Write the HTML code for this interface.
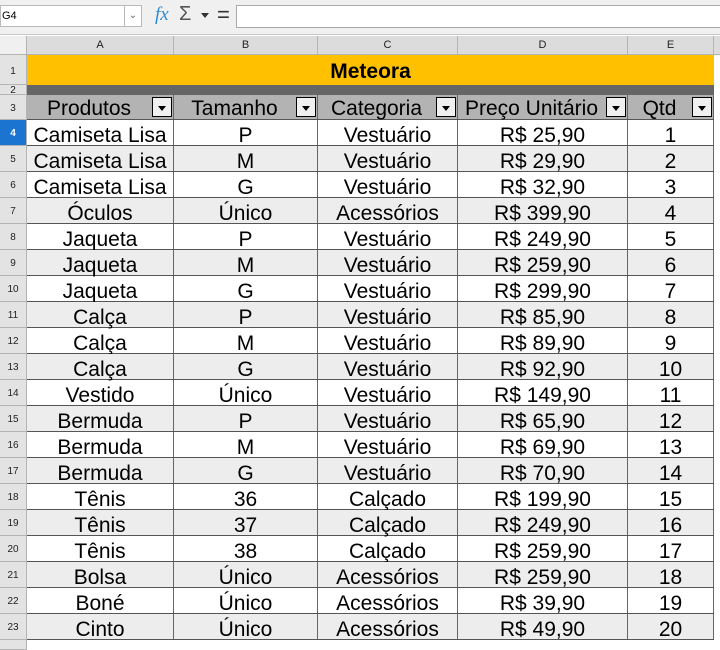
<!DOCTYPE html><html><head><meta charset="utf-8"><style>
*{margin:0;padding:0;box-sizing:border-box}
body{width:720px;height:646px;overflow:hidden;background:#fff;font-family:"Liberation Sans",sans-serif;position:relative}
.tb{position:absolute;left:0;top:0;width:720px;height:35px;background:#f0f0f0;border-bottom:1px solid #c8c8c8}
.nb{position:absolute;left:0;top:5px;width:142px;height:22px;background:#fff;border:1px solid #bbb;font-size:11px;line-height:20px;padding-left:1px}
.nbb{position:absolute;left:124px;top:5px;width:18px;height:22px;border:1px solid #bbb;background:#fff;font-size:10px;color:#666;text-align:center;line-height:20px}
.fx{position:absolute;left:155px;top:4px;font-family:"Liberation Serif",serif;font-style:italic;color:#2a8ad4;font-size:19px}
.sg{position:absolute;left:179px;top:3px;font-size:20px;color:#555}
.ar{position:absolute;left:201px;top:13px;border-left:4px solid transparent;border-right:4px solid transparent;border-top:5px solid #333}
.eq{position:absolute;left:217px;top:2px;font-size:22px;color:#333}
.fi{position:absolute;left:236px;top:5px;width:490px;height:23px;background:#fff;border:1px solid #aaa}
.ch{position:absolute;top:36px;height:19px;background:#dcdcdc;border-right:1px solid #b4b4b4;border-bottom:1px solid #b4b4b4;font-size:11px;text-align:center;line-height:18px;color:#222}
.rh{position:absolute;left:0;width:27px;background:#e3e3e3;border-bottom:1px solid #b4b4b4;border-right:1px solid #b4b4b4;font-size:10px;text-align:center;color:#222;padding-top:2px}
.row{position:absolute;left:27px;width:687px;display:flex;height:26px;border-bottom:1px solid #555}
.row div{border-right:1px solid #666;text-align:center;font-size:21px;line-height:25px;padding-top:3px;color:#000;white-space:nowrap}
.c1{width:147px}.c2{width:144px}.c3{width:140px}.c4{width:170px}.c5{width:86px}
.g{background:#ededed}
.hd{background:#b3b3b3}
.hd div{position:relative;padding-right:22px;padding-top:1px}
.dd{position:absolute;right:1px;top:2px;width:20px;height:20px;border:1px solid #000;background:#f0f0f0}
.dd:after{content:"";position:absolute;left:5px;top:8px;border-left:4px solid transparent;border-right:4px solid transparent;border-top:5px solid #000}
</style></head><body>
<div class="tb"><div class="nb">G4</div><div class="nbb">⌄</div><div class="fx">fx</div><div class="sg">Σ</div><div class="ar"></div><div class="eq">=</div><div class="fi"></div></div>
<div class="ch" style="left:0;width:27px;background:#f0f0f0"></div>
<div class="ch" style="left:27px;width:147px">A</div>
<div class="ch" style="left:174px;width:144px">B</div>
<div class="ch" style="left:318px;width:140px">C</div>
<div class="ch" style="left:458px;width:170px">D</div>
<div class="ch" style="left:628px;width:86px">E</div>
<div class="ch" style="left:714px;width:6px;border-right:none"></div>
<div class="rh" style="top:55px;height:30px;line-height:29px">1</div>
<div class="rh" style="top:85px;height:10px;line-height:8px">2</div>
<div class="rh" style="top:95px;height:25px;line-height:23px">3</div>
<div style="position:absolute;left:27px;top:55px;width:687px;height:30px;background:#ffc000;text-align:center;font-weight:bold;font-size:21px;line-height:33px">Meteora</div>
<div style="position:absolute;left:27px;top:85px;width:687px;height:10px;background:#666"></div>
<div class="row hd" style="top:95px;height:25px"><div class="c1">Produtos<span class="dd"></span></div><div class="c2">Tamanho<span class="dd"></span></div><div class="c3">Categoria<span class="dd"></span></div><div class="c4">Preço Unitário<span class="dd"></span></div><div class="c5">Qtd<span class="dd"></span></div></div>
<div class="rh" style="top:120px;height:26px;line-height:24px;background:#1a74d0;color:#fff;font-weight:bold">4</div>
<div class="row" style="top:120px"><div class="c1">Camiseta Lisa</div><div class="c2">P</div><div class="c3">Vestuário</div><div class="c4">R$ 25,90</div><div class="c5">1</div></div>
<div class="rh" style="top:146px;height:26px;line-height:24px">5</div>
<div class="row g" style="top:146px"><div class="c1">Camiseta Lisa</div><div class="c2">M</div><div class="c3">Vestuário</div><div class="c4">R$ 29,90</div><div class="c5">2</div></div>
<div class="rh" style="top:172px;height:26px;line-height:24px">6</div>
<div class="row" style="top:172px"><div class="c1">Camiseta Lisa</div><div class="c2">G</div><div class="c3">Vestuário</div><div class="c4">R$ 32,90</div><div class="c5">3</div></div>
<div class="rh" style="top:198px;height:26px;line-height:24px">7</div>
<div class="row g" style="top:198px"><div class="c1">Óculos</div><div class="c2">Único</div><div class="c3">Acessórios</div><div class="c4">R$ 399,90</div><div class="c5">4</div></div>
<div class="rh" style="top:224px;height:26px;line-height:24px">8</div>
<div class="row" style="top:224px"><div class="c1">Jaqueta</div><div class="c2">P</div><div class="c3">Vestuário</div><div class="c4">R$ 249,90</div><div class="c5">5</div></div>
<div class="rh" style="top:250px;height:26px;line-height:24px">9</div>
<div class="row g" style="top:250px"><div class="c1">Jaqueta</div><div class="c2">M</div><div class="c3">Vestuário</div><div class="c4">R$ 259,90</div><div class="c5">6</div></div>
<div class="rh" style="top:276px;height:26px;line-height:24px">10</div>
<div class="row" style="top:276px"><div class="c1">Jaqueta</div><div class="c2">G</div><div class="c3">Vestuário</div><div class="c4">R$ 299,90</div><div class="c5">7</div></div>
<div class="rh" style="top:302px;height:26px;line-height:24px">11</div>
<div class="row g" style="top:302px"><div class="c1">Calça</div><div class="c2">P</div><div class="c3">Vestuário</div><div class="c4">R$ 85,90</div><div class="c5">8</div></div>
<div class="rh" style="top:328px;height:26px;line-height:24px">12</div>
<div class="row" style="top:328px"><div class="c1">Calça</div><div class="c2">M</div><div class="c3">Vestuário</div><div class="c4">R$ 89,90</div><div class="c5">9</div></div>
<div class="rh" style="top:354px;height:26px;line-height:24px">13</div>
<div class="row g" style="top:354px"><div class="c1">Calça</div><div class="c2">G</div><div class="c3">Vestuário</div><div class="c4">R$ 92,90</div><div class="c5">10</div></div>
<div class="rh" style="top:380px;height:26px;line-height:24px">14</div>
<div class="row" style="top:380px"><div class="c1">Vestido</div><div class="c2">Único</div><div class="c3">Vestuário</div><div class="c4">R$ 149,90</div><div class="c5">11</div></div>
<div class="rh" style="top:406px;height:26px;line-height:24px">15</div>
<div class="row g" style="top:406px"><div class="c1">Bermuda</div><div class="c2">P</div><div class="c3">Vestuário</div><div class="c4">R$ 65,90</div><div class="c5">12</div></div>
<div class="rh" style="top:432px;height:26px;line-height:24px">16</div>
<div class="row" style="top:432px"><div class="c1">Bermuda</div><div class="c2">M</div><div class="c3">Vestuário</div><div class="c4">R$ 69,90</div><div class="c5">13</div></div>
<div class="rh" style="top:458px;height:26px;line-height:24px">17</div>
<div class="row g" style="top:458px"><div class="c1">Bermuda</div><div class="c2">G</div><div class="c3">Vestuário</div><div class="c4">R$ 70,90</div><div class="c5">14</div></div>
<div class="rh" style="top:484px;height:26px;line-height:24px">18</div>
<div class="row" style="top:484px"><div class="c1">Tênis</div><div class="c2">36</div><div class="c3">Calçado</div><div class="c4">R$ 199,90</div><div class="c5">15</div></div>
<div class="rh" style="top:510px;height:26px;line-height:24px">19</div>
<div class="row g" style="top:510px"><div class="c1">Tênis</div><div class="c2">37</div><div class="c3">Calçado</div><div class="c4">R$ 249,90</div><div class="c5">16</div></div>
<div class="rh" style="top:536px;height:26px;line-height:24px">20</div>
<div class="row" style="top:536px"><div class="c1">Tênis</div><div class="c2">38</div><div class="c3">Calçado</div><div class="c4">R$ 259,90</div><div class="c5">17</div></div>
<div class="rh" style="top:562px;height:26px;line-height:24px">21</div>
<div class="row g" style="top:562px"><div class="c1">Bolsa</div><div class="c2">Único</div><div class="c3">Acessórios</div><div class="c4">R$ 259,90</div><div class="c5">18</div></div>
<div class="rh" style="top:588px;height:26px;line-height:24px">22</div>
<div class="row" style="top:588px"><div class="c1">Boné</div><div class="c2">Único</div><div class="c3">Acessórios</div><div class="c4">R$ 39,90</div><div class="c5">19</div></div>
<div class="rh" style="top:614px;height:26px;line-height:24px">23</div>
<div class="row g" style="top:614px"><div class="c1">Cinto</div><div class="c2">Único</div><div class="c3">Acessórios</div><div class="c4">R$ 49,90</div><div class="c5">20</div></div>
<div class="rh" style="top:640px;height:10px"></div>
</body></html>
